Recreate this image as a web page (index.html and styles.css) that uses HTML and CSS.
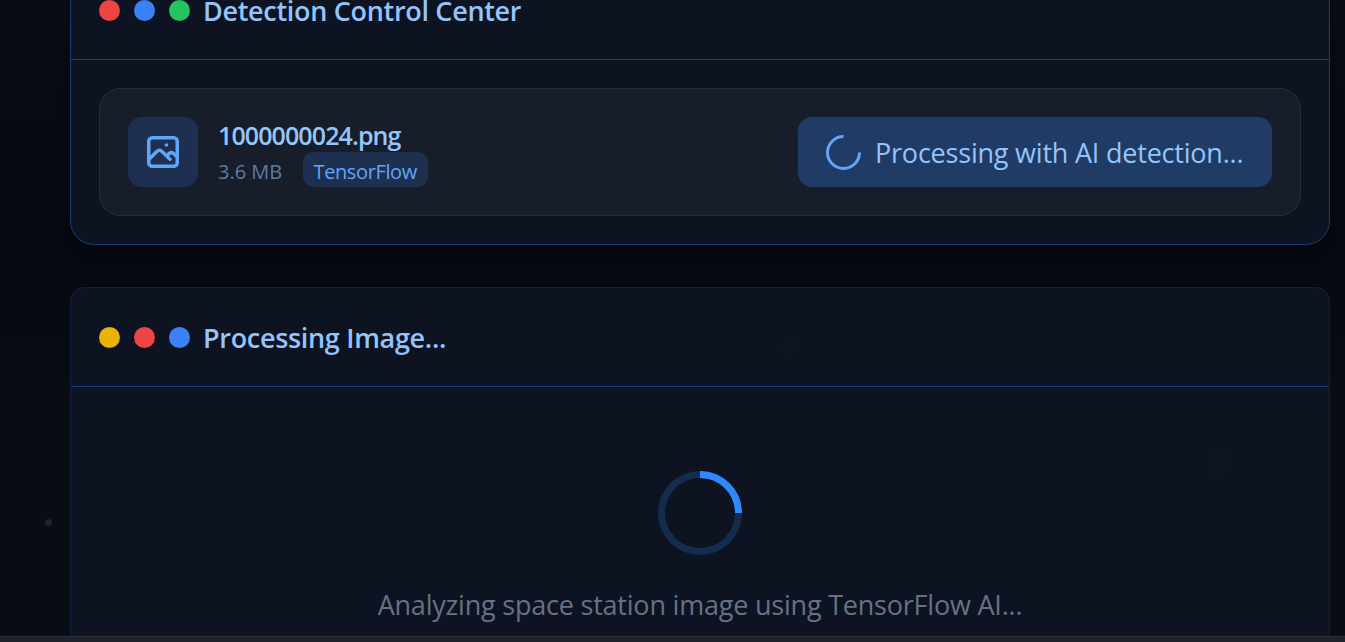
FILE: index.html
```
<!DOCTYPE html>
<html lang="en">
<head>
<meta charset="utf-8">
<title>Detection Control Center</title>
<link rel="stylesheet" href="styles.css">
</head>
<body>
<main class="page">
  <section class="card card-control">
    <header class="card-header">
      <span class="dot red"></span><span class="dot blue"></span><span class="dot green"></span>
      <h2 class="title">Detection Control Center</h2>
    </header>
    <div class="card-body">
      <div class="file">
        <div class="thumb">
          <svg class="image-icon" viewBox="0 0 32 32" fill="none" stroke="currentColor" stroke-width="3.5" stroke-linecap="round" stroke-linejoin="round">
            <rect x="1.75" y="1.75" width="28.5" height="28.5" rx="3.5"/>
            <path d="M1.8 23.5L9.8 15.5Q12.4 13 15 15.5L23 23.2M20.2 19.9L21.7 17.8Q24.3 15.3 26.9 17.8L30 20.6M19.4 9h.04"/>
          </svg>
        </div>
        <div class="info">
          <div class="name">1000000024.png</div>
          <div class="meta"><span class="size">3.6 MB</span><span class="tag">TensorFlow</span></div>
        </div>
        <div class="status">
          <svg class="spinner-small" viewBox="0 0 35 35" fill="none" stroke="currentColor" stroke-width="3"><path d="M17.5 1.5A16 16 0 1 0 33.5 17.5"/></svg>
          <span class="status-text">Processing with AI detection...</span>
        </div>
      </div>
    </div>
  </section>
  <section class="card card-processing">
    <header class="card-header">
      <span class="dot yellow"></span><span class="dot red"></span><span class="dot blue"></span>
      <h2 class="title">Processing Image...</h2>
    </header>
    <div class="loading">
      <svg class="spinner" viewBox="0 0 84 84" fill="none" stroke-width="7"><circle cx="42" cy="42" r="38.5" stroke="#152c4f"/><path d="M42 3.5A38.5 38.5 0 0 1 80.5 42" stroke="#3088ff"/></svg>
      <p class="loading-text">Analyzing space station image using TensorFlow AI...</p>
    </div>
  </section>
</main>
<i class="star star-left"></i><i class="star star-right"></i><i class="star star-mid"></i>
<footer class="bottom-bar"></footer>
</body>
</html>
```
FILE: styles.css
```
* { box-sizing: border-box; }
body {
  margin: 0;
  height: 642px;
  overflow: hidden;
  display: flex;
  flex-direction: column;
  background: linear-gradient(#080c13 0, #060811 260px, #080c13 400px, #080c13 642px);
  font-family: "Open Sans", "Noto Sans", sans-serif;
  color: #93c5fd;
  white-space: nowrap;
}
.page {
  flex: 1;
  min-height: 0;
  overflow: hidden;
  padding: 0 15px 0 70px;
}
.card {
  background: #0d1321;
  border: 1px solid #193d77;
  border-radius: 24px;
}
.card-control { margin-top: -40px; box-shadow: 0 5px 10px rgba(0, 0, 0, .25); }
.card-processing { margin-top: 42px; height: 420px; border-color: #10203b; border-radius: 14px; }
.card-header {
  display: flex;
  align-items: center;
  gap: 14px;
  height: 99px;
  padding: 0 28px;
  border-bottom: 1px solid #173f77;
}
.dot { width: 21px; height: 21px; border-radius: 50%; }
.red { background: #ef4444; }
.blue { background: #3b82f6; }
.green { background: #22c55e; }
.yellow { background: #eab308; }
.title { margin: 0 0 0 -1px; padding-top: 2px; font-size: 27px; font-weight: 600; line-height: 42px; letter-spacing: -.31px; }
.card-body { padding: 28px; }
.file {
  display: flex;
  align-items: center;
  height: 128px;
  padding: 28px;
  background: #171d29;
  border: 1px solid #272d3d;
  border-radius: 21px;
}
.thumb {
  display: grid;
  place-items: center;
  width: 70px;
  height: 70px;
  border-radius: 14px;
  background: #1e3050;
  color: #60a5fa;
}
.image-icon { width: 32px; height: 32px; }
.info { margin-left: 20px; }
.name { height: 35px; line-height: 36px; font-size: 25px; font-weight: 600; letter-spacing: -.9px; }
.meta { display: flex; gap: 21px; height: 35px; line-height: 39px; font-size: 20px; color: #5d7ba5; }
.tag { width: 125px; padding: 0 10.5px; border-radius: 10px; background: #1e3050; color: #60a5fa; letter-spacing: -.38px; }
.size { width: 64px; }
.status {
  display: flex;
  align-items: center;
  gap: 14px;
  width: 474px;
  height: 70px;
  margin-left: auto;
  padding: 0 28px;
  border-radius: 14px;
  background: #203b66;
}
.spinner-small { width: 35px; height: 35px; color: #60a5fa; flex: none; }
.status-text { padding-top: 2px; font-size: 27px; line-height: 42px; letter-spacing: -.21px; }
.loading { display: flex; flex-direction: column; align-items: center; padding-top: 84px; }
.spinner { width: 84px; height: 84px; }
.loading-text { margin: 29px 0 0; font-size: 27px; line-height: 42px; letter-spacing: -.21px; color: #667284; }
.star { position: absolute; border-radius: 50%; }
.star-left { left: 45px; top: 519px; width: 7px; height: 7px; background: #21232d; }
.star-right { left: 1206px; top: 450px; width: 27px; height: 27px; background: #0e1421; }
.star-mid { left: 781px; top: 338px; width: 18px; height: 18px; background: #0e1421; }
.bottom-bar { flex: none; height: 6px; background: #20222b; border-top: 1px solid #2d3035; }
```
